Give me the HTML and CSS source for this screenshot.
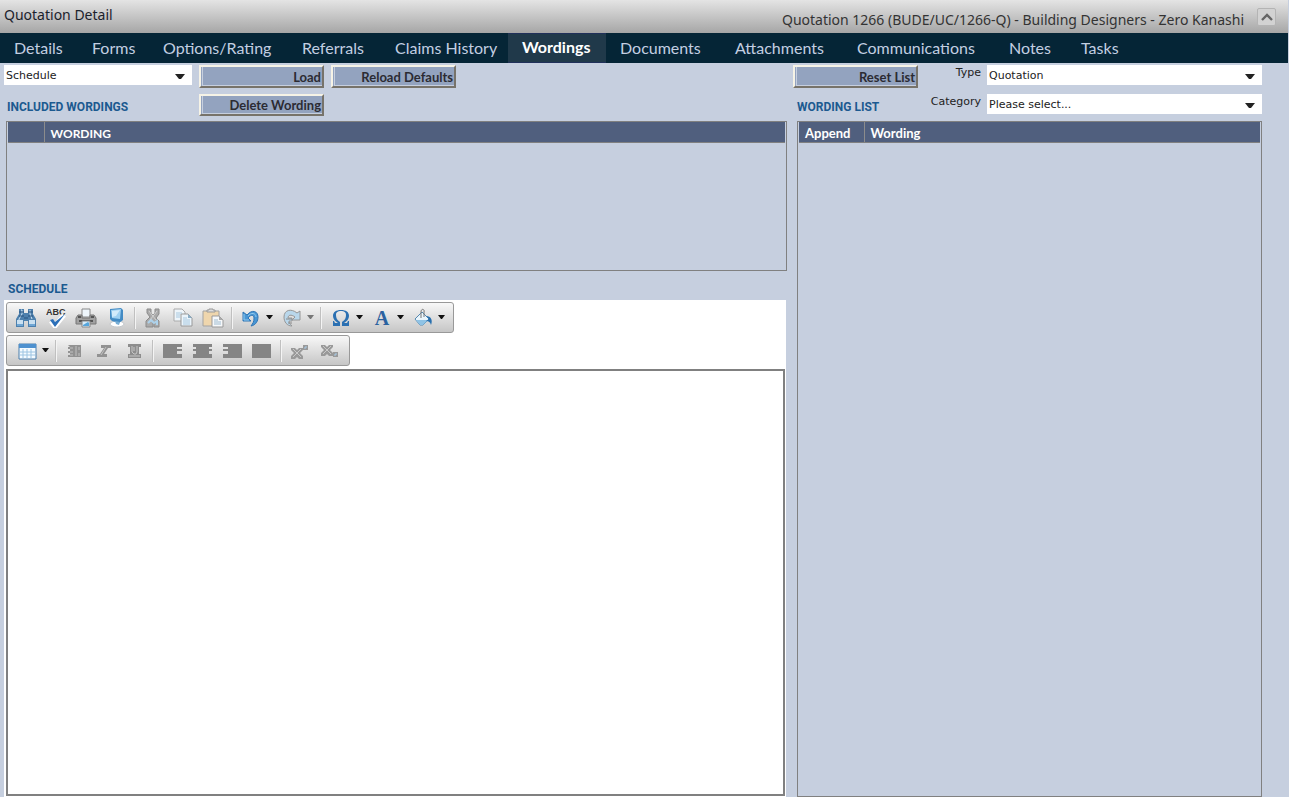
FILE: index.html
```html
<!DOCTYPE html>
<html lang="en">
<head>
<meta charset="utf-8">
<title>Quotation Detail</title>
<link rel="stylesheet" href="styles.css">
</head>
<body>
<header class="titlebar">
  <h1 class="title">Quotation Detail</h1>
  <p class="record">Quotation 1266 (BUDE/UC/1266-Q) - Building Designers - Zero Kanashi</p>
  <button class="collapse" type="button" aria-label="Collapse"><svg width="12" height="8" viewBox="0 0 12 8"><path d="M1 7 6 2l5 5" fill="none" stroke="#666" stroke-width="2.4"/></svg></button>
</header>
<nav class="tabs">
  <a class="tab" href="#">Details</a>
  <a class="tab" href="#">Forms</a>
  <a class="tab" href="#">Options/Rating</a>
  <a class="tab" href="#">Referrals</a>
  <a class="tab" href="#">Claims History</a>
  <a class="tab active" href="#" aria-current="page">Wordings</a>
  <a class="tab" href="#">Documents</a>
  <a class="tab" href="#">Attachments</a>
  <a class="tab" href="#">Communications</a>
  <a class="tab" href="#">Notes</a>
  <a class="tab" href="#">Tasks</a>
</nav>
<main class="content">
  <section class="left">
    <div class="controls">
      <div class="combo"><select class="select" aria-label="Document"><option>Schedule</option></select><svg class="caret" width="10" height="6"><path d="M0 0h10L6 5H4z" fill="#222"/></svg></div>
      <button class="btn" type="button">Load</button>
      <button class="btn" type="button">Reload Defaults</button>
      <h2 class="heading">INCLUDED WORDINGS</h2>
      <button class="btn short" type="button">Delete Wording</button>
    </div>
    <div class="panel included">
      <table class="grid caps">
        <thead><tr><th class="pick" aria-label="Select"></th><th>WORDING</th></tr></thead>
        <tbody></tbody>
      </table>
    </div>
    <h2 class="heading schedule">SCHEDULE</h2>
    <div class="editor">
      <div class="toolbar">
        <button class="tool" type="button" aria-label="Find"><svg width="20" height="20" viewBox="0 0 20 20"><path d="M3 1h5v4h4V1h5v5l3 5v8h-8v-6H8v6H0v-8l3-5z" fill="#4d80ad"/><path d="M5 2h1v4L3 11v2m11-11v4l2 5" stroke="#cfe4f5" fill="none"/><path d="M1 12h6v6H1zm12 0h6v6h-6z" fill="#c9e0f1"/><path d="M1 16h6v2H1zm12 0h6v2h-6z" fill="#6fa6d4"/><path d="M3 4h5m4 0h5M3 8h5m4 0h5M8 10h4" stroke="#28527e"/></svg></button>
        <button class="tool" type="button" aria-label="Spelling"><svg width="20" height="20" viewBox="0 0 20 20"><text x="0" y="7" class="abc">ABC</text><path d="m5 13 4 5 9-11" fill="none" stroke="#fff" stroke-width="5"/><path d="m4 12 5 7L19 6 9 14l-2-3z" fill="#2c70b9"/></svg></button>
        <button class="tool" type="button" aria-label="Print"><svg width="22" height="20" viewBox="0 0 22 20"><path d="M7 1h8v8H7z" fill="#eef6fc" stroke="#888"/><path d="M3 7h4v3h8V7h4l2 3v6H1v-6z" fill="#a1a1a1" stroke="#777"/><path d="M3 9h3m10 0h3M4 13h14" stroke="#555" stroke-width="2"/><path d="M7 13h8v6H7z" fill="#d8edfb" stroke="#888"/><path d="m8 17 5-3 1 1v3H8z" fill="#55a5dc"/></svg></button>
        <button class="tool" type="button" aria-label="Preview"><svg width="20" height="20" viewBox="0 0 20 20"><ellipse cx="11" cy="16" rx="7" ry="3" fill="#fff" stroke="#c3c8cc"/><path d="M4 1 15 0l2 2v10l-4 3-7-2-2-2z" fill="#438bc4"/><path d="m5 2 10-1-1 10-8-1z" fill="#9ed0f2"/><path d="m6 3 8-1-4 6-4 1z" fill="#d2ebfb"/><path d="m9 13 5 1-1 3-3-1z" fill="#78aed5"/></svg></button>
        <i class="sep"></i>
        <button class="tool" type="button" aria-label="Cut"><svg width="20" height="20" viewBox="0 0 20 20"><path d="M4 1h4v4l2 2 2-2V1h4v5l-3 4 3 3v6h-5v-4h-1v4H3v-6l4-4-3-4z" fill="#aaa" stroke="#8b8b8b"/><path d="m5 15 3-3 3 3 3-2v4" fill="none" stroke="#add2eb" stroke-width="2"/><path d="m6 3 7 9m1-9-7 9" stroke="#d1d1d1"/></svg></button>
        <button class="tool" type="button" aria-label="Copy"><svg width="20" height="20" viewBox="0 0 20 20"><path d="M1 1h8l3 3v9H1z" fill="#eef5fa" stroke="#aaa"/><path d="M8 6h7l4 4v8H8z" fill="#eaf4fb" stroke="#999"/><path d="M3 5h6M3 7h4M3 9h4M10 10h4m-4 2h7m-7 2h7m-7 2h7" stroke="#a8c8df"/><path d="M15 6v4h4z" fill="#8caec6"/></svg></button>
        <button class="tool" type="button" aria-label="Paste"><svg width="22" height="20" viewBox="0 0 22 20"><path d="M1 3h16v15H1z" fill="#efd6ad" stroke="#a3a3a3"/><path d="M5 4V2h2V1h4v1h2v2z" fill="#ddd" stroke="#999"/><path d="M10 8h7l4 4v7H10z" fill="#f6f8fa" stroke="#999"/><path d="M12 12h4m-4 2h7m-7 2h7" stroke="#9ebbd0"/><path d="M17 8v4h4z" fill="#aaa"/></svg></button>
        <i class="sep"></i>
        <button class="tool menu" type="button" aria-label="Undo"><svg width="20" height="20" viewBox="0 0 20 20"><path d="M2 4v9h8l-3-3c3-4 6-3 6 0 0 4-1 5-3 8 5-1 7-5 7-9 0-6-6-8-11-2z" fill="#4896d4" stroke="#2e74b4"/><path d="M3 6v6h5M7 8c3-4 8-3 8 1" fill="none" stroke="#92c9ee"/></svg><svg class="drop" width="7" height="5"><path d="M0 0h7L4 4H3z"/></svg></button>
        <button class="tool menu dim" type="button" aria-label="Redo"><svg width="20" height="20" viewBox="0 0 20 20"><path d="M18 3v9h-8l3-3C9 6 6 7 6 10h4v3H7c0 2 1 3 3 5-5 0-8-4-8-9 0-7 7-9 13-4z" fill="#b9d7eb" stroke="#969696"/><path d="M4 11h6M6 15h4" stroke="#888"/></svg><svg class="drop" width="7" height="5"><path d="M0 0h7L4 4H3z"/></svg></button>
        <i class="sep wide"></i>
        <button class="tool menu" type="button" aria-label="Symbol"><svg width="20" height="20" viewBox="0 0 20 20"><path d="M2 18v-5h1l1 2h3C4 13 2 11 2 8c0-4 3-6 8-6s8 2 8 6c0 3-2 5-5 7h3l1-2h1v5h-7v-4c3-2 4-4 4-7 0-3-2-4-5-4S5 4 5 7c0 3 1 5 4 7v4z" fill="#2b70b2"/></svg><svg class="drop" width="7" height="5"><path d="M0 0h7L4 4H3z"/></svg></button>
        <button class="tool menu" type="button" aria-label="Font colour"><svg width="20" height="20" viewBox="0 0 20 20"><text x="10" y="17" text-anchor="middle" class="letter">A</text></svg><svg class="drop" width="7" height="5"><path d="M0 0h7L4 4H3z"/></svg></button>
        <button class="tool menu" type="button" aria-label="Fill colour"><svg width="20" height="20" viewBox="0 0 20 20"><path d="m2 11 7-7 7 7-6 6H7z" fill="#e9f5fc" stroke="#5589b1"/><path d="M3 12h12l-5 5H7z" fill="#8fc3e5"/><path d="M8 10V4c0-4 4-3 3 0v5" fill="none" stroke="#777"/><path d="M13 8c5 0 7 4 5 9-1-3-2-4-5-4l3-2z" fill="#276fae"/></svg><svg class="drop" width="7" height="5"><path d="M0 0h7L4 4H3z"/></svg></button>
      </div>
      <div class="toolbar">
        <button class="tool menu" type="button" aria-label="Table"><svg width="20" height="20" viewBox="0 0 20 20"><path d="M2 3h17v15H2z" fill="#f5fbff" stroke="#4b7fad"/><path d="M2 3h17v4H2z" fill="#4e91cf"/><path d="M3 11h15M3 14h15M6 8v9M10 8v9M14 8v9" stroke="#9cc4e2"/></svg><svg class="drop" width="7" height="5"><path d="M0 0h7L4 4H3z"/></svg></button>
        <i class="sep"></i>
        <button class="tool" type="button" aria-label="Bold"><svg width="20" height="20" viewBox="0 0 20 20"><path d="M4 4h13v12H4v-2h2v-2H4v-2h2V8H4V6h2z" fill="#929292"/><path d="M6 7h3m-3 4h3m-3 3h3m3-9v10m3-9v3m0 3v3" stroke="#c1c1c1"/></svg></button>
        <button class="tool" type="button" aria-label="Italic"><svg width="20" height="20" viewBox="0 0 20 20"><path d="M7 4h10v3h-3l-4 6h3v3H3v-3h3l4-6H7z" fill="#929292"/><path d="m12 6-5 8" stroke="#c1c1c1"/></svg></button>
        <button class="tool" type="button" aria-label="Underline"><svg width="20" height="20" viewBox="0 0 20 20"><path d="M4 3h13v3h-2v7h2v4H4v-4h2V6H4z" fill="#8d8d8d"/><path d="M8 5v6l2 2h2l1-2V5M5 15h11M10 6v4" fill="none" stroke="#c6c6c6"/></svg></button>
        <i class="sep wide"></i>
        <button class="tool" type="button" aria-label="Align left"><svg width="20" height="20" viewBox="0 0 20 20"><path d="M1 3h19v3h-5v2h5v2h-5v3h5v4H1z" fill="#858585"/></svg></button>
        <button class="tool" type="button" aria-label="Align centre"><svg width="20" height="20" viewBox="0 0 20 20"><path d="M1 3h19v3h-3v2h3v2h-3v3h3v4H1v-4h3v-3H1V8h3V6H1z" fill="#858585"/></svg></button>
        <button class="tool" type="button" aria-label="Align right"><svg width="20" height="20" viewBox="0 0 20 20"><path d="M1 3h19v14H1v-4h5v-3H1V8h5V6H1z" fill="#858585"/></svg></button>
        <button class="tool" type="button" aria-label="Justify"><svg width="20" height="20" viewBox="0 0 20 20"><path d="M0 3h19v14H0z" fill="#858585"/></svg></button>
        <i class="sep"></i>
        <button class="tool" type="button" aria-label="Superscript"><svg width="20" height="20" viewBox="0 0 20 20"><path d="M2 7h4l2 2 2-2h4v2l-3 3 3 3v3h-4l-2-2-2 2H2v-3l3-3-3-3z" fill="#999"/><path d="m4 8 8 8m0-8-8 8" stroke="#c8c8c8"/><path d="M14 4h5v5h-5z" fill="#999"/><path d="M15 7h2V5" fill="none" stroke="#a9cce8"/></svg></button>
        <button class="tool" type="button" aria-label="Subscript"><svg width="20" height="20" viewBox="0 0 20 20"><path d="M2 4h4l2 2 2-2h4v2l-3 3 3 3v3h-4l-2-2-2 2H2v-3l3-3-3-3z" fill="#999"/><path d="m4 5 8 8m0-8-8 8" stroke="#c8c8c8"/><path d="M14 11h5v5h-5z" fill="#999"/><path d="M15 14h2v-2" fill="none" stroke="#a9cce8"/></svg></button>
      </div>
      <textarea class="text" aria-label="Schedule text"></textarea>
    </div>
  </section>
  <section class="right">
    <div class="filters">
      <button class="btn" type="button">Reset List</button>
      <label class="label" for="type">Type</label>
      <div class="combo"><select class="select" id="type"><option>Quotation</option></select><svg class="caret" width="10" height="6"><path d="M0 0h10L6 5H4z" fill="#222"/></svg></div>
      <h2 class="heading">WORDING LIST</h2>
      <label class="label" for="category">Category</label>
      <div class="combo"><select class="select" id="category"><option>Please select...</option></select><svg class="caret" width="10" height="6"><path d="M0 0h10L6 5H4z" fill="#222"/></svg></div>
    </div>
    <div class="panel list">
      <table class="grid">
        <thead><tr><th class="append">Append</th><th>Wording</th></tr></thead>
        <tbody></tbody>
      </table>
    </div>
  </section>
</main>
</body>
</html>
```
FILE: styles.css
```css
* { box-sizing: border-box; }

body {
  margin: 0;
  min-height: 100vh;
  display: flex;
  flex-direction: column;
  background: #c6cfdf;
  color: #222;
  font: 12px Lato, sans-serif;
}

h1, h2, p { margin: 0; }
button, select, textarea { font: inherit; color: inherit; border-radius: 0; }

.titlebar {
  display: flex;
  height: 33px;
  margin-right: 1px;
  padding: 0 12px 0 4px;
  background: linear-gradient(#e4e4e4, #a6a6a6);
  font: 14px/20px "Noto Sans", sans-serif;
}
.title { flex: 1; padding-top: 5px; font: inherit; color: #1b222c; }
.record { padding-top: 10px; color: #333; }
.collapse {
  display: grid;
  place-items: center;
  width: 19px;
  height: 18px;
  margin: 8px 0 0 13px;
  padding: 0;
  border: 1px solid #b4b4b4;
  border-radius: 2px;
  background: #d2d2d2;
}

.tabs {
  display: grid;
  grid-template-columns: 78px 71px 139px 93px 127px 98px 115px 122px 152px 72px 1fr;
  height: 30px;
  margin-right: 1px;
  background: #052536;
}
.tab {
  height: 30px;
  padding-left: 14px;
  color: #c3cfe2;
  font-size: 16px;
  line-height: 30px;
  text-decoration: none;
  white-space: nowrap;
}
.tab.active {
  border: solid #20305a;
  border-width: 1px 0;
  background: #20394a;
  color: #fff;
  font-weight: 700;
  line-height: 26px;
}

.content {
  flex: 1;
  display: grid;
  grid-template-columns: 783fr 469fr;
  gap: 6px;
  padding: 2px 27px 0 4px;
}
.left, .right { display: flex; flex-direction: column; }

.controls, .filters {
  display: grid;
  grid-template-rows: 23px 22px;
  row-gap: 6px;
  margin-bottom: 5px;
}
.controls { grid-template-columns: 188px 125px 125px; column-gap: 7px; }
.filters { grid-template-columns: 125px 1fr 275px; column-gap: 6px; }

.combo { position: relative; height: 20px; }
.select {
  appearance: none;
  display: block;
  width: 100%;
  height: 20px;
  padding: 1px 20px 0 2px;
  border: 0;
  background: #fff;
  font: 11px "DejaVu Sans", sans-serif;
}
.caret { position: absolute; right: 7px; top: 9px; pointer-events: none; }
.label { font: 11px/15px "DejaVu Sans", sans-serif; text-align: right; }

.btn {
  height: 23px;
  padding: 0 1px;
  border: 2px solid;
  border-color: #f6f3e6 #77736a #77736a #f6f3e6;
  background: #93a3bf;
  box-shadow: inset 1px 0 #93a3bf, inset 2px -1px #c6cfdf;
  color: #2b2b33;
  font-size: 13px;
  font-weight: 700;
  line-height: 18px;
  text-align: right;
}
.btn.short { height: 22px; }

.heading {
  padding: 5px 0 0 3px;
  color: #1c5a90;
  font: 700 12px/16px Roboto, sans-serif;
}
.filters .heading { padding-left: 4px; white-space: nowrap; }
.schedule { padding: 10px 0 3px 4px; }

.panel { padding: 0 1px; border: 1px solid #808080; }
.included { height: 150px; margin-left: 2px; }
.list { flex: 1; margin-left: 4px; }
.grid { width: 100%; border-collapse: collapse; }
.grid th {
  height: 20px;
  padding: 3px 6px 0;
  border-bottom: 1px solid #808080;
  background: #505f7e;
  color: #fff;
  font-size: 13px;
  font-weight: 700;
  line-height: 17px;
  text-align: left;
}
.grid.caps th { font-size: 12px; }
.grid th:first-child { border-right: 1px solid #8c8c8c; }
.grid .pick { width: 36px; }
.grid .append { width: 65px; }

.editor {
  flex: 1;
  display: flex;
  flex-direction: column;
  align-items: flex-start;
  gap: 2px;
  margin-right: 1px;
  padding: 2px 1px 1px 2px;
  background: #fff;
}
.toolbar {
  display: flex;
  align-items: center;
  height: 31px;
  padding: 0 5px 0 4px;
  border: 1px solid #999;
  border-radius: 3px;
  background: linear-gradient(#f8f8f8, #c6c6c6);
}
.tool {
  display: flex;
  align-items: center;
  justify-content: center;
  width: 30px;
  height: 28px;
  padding: 0;
  border: 0;
  background: none;
}
.tool.menu { width: 41px; padding-left: 3px; gap: 5px; }
.drop { fill: #111; }
.dim .drop { fill: #777; }
.sep {
  width: 1px;
  height: 22px;
  margin: 0 3px;
  background: #c0c0c0;
  box-shadow: 1px 0 #f4f4f4;
}
.sep.wide { margin-right: 4px; }
.abc { font: 700 9px "Liberation Sans", sans-serif; fill: #333; }
.letter { font: 700 20px "Liberation Serif", serif; fill: #2b62a0; }

.text {
  flex: 1;
  align-self: stretch;
  margin-top: 1px;
  padding: 4px;
  border: 2px solid #808080;
  background: #fff;
  resize: none;
  outline: 0;
}
```
